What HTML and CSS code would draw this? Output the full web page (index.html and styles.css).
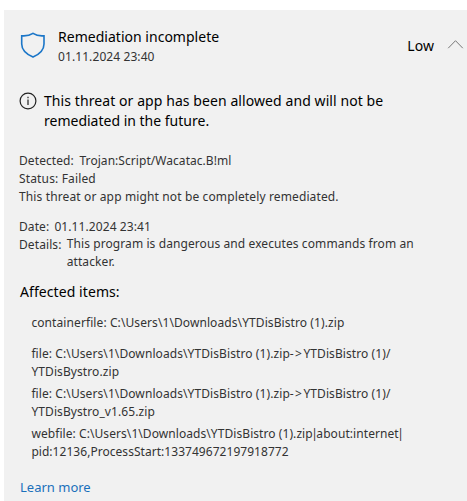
FILE: index.html
```
<!DOCTYPE html>
<html lang="en">
<head>
<meta charset="utf-8">
<title>Protection history</title>
<link rel="stylesheet" href="styles.css">
</head>
<body>
<main class="card">
  <header class="head">
    <svg class="shield" width="26" height="28" viewBox="0 0 26 28" fill="none" stroke="#1b76c8" stroke-width="1.600"><path d="M13 2.300C9.800 4.400 6 5.200 1.700 4.800V13C1.700 18.500 6.500 23.200 13 26.100C19.500 23.200 24 18.500 24 13V4.800C20 5.200 16.200 4.400 13 2.300Z"/></svg>
    <div class="heading">
      <h1 class="title">Remediation incomplete</h1>
      <p class="time">01.11.2024 23:40</p>
    </div>
    <span class="level">Low</span>
    <svg class="chevron" width="17" height="11" viewBox="0 0 17 11" fill="none" stroke="#777" stroke-width="1"><path d="M1.200 9.200L8.500 1.700L15.800 9.200"/></svg>
  </header>
  <section class="notice">
    <svg class="info" width="18" height="18" viewBox="0 0 18 18"><circle cx="9" cy="9" r="7.900" fill="none" stroke="#222" stroke-width="1.200"/><path d="M9 7.500V13M9 4.800V6.200" stroke="#222" stroke-width="1.200"/></svg>
    <p>This threat or app has been allowed and will not be<br><span class="plain">remediated in the future.</span></p>
  </section>
  <section class="status">
    <p><span class="label">Detected:</span><span class="threat">Trojan:Script/Wacatac.B!ml</span></p>
    <p class="state">Status: Failed</p>
    <p class="remark">This threat or app might not be completely remediated.</p>
  </section>
  <section class="details">
    <p><span class="label date">Date:</span>01.11.2024 23:41</p>
    <div class="description"><span class="name">Details:</span><p>This program is dangerous and executes commands from an<br>attacker.</p></div>
  </section>
  <h2 class="affected">Affected items:</h2>
  <ul class="items">
    <li class="container">containerfile: C:\Users\1\Downloads\YTDisBistro (1).zip</li>
    <li>file: C:\Users\1\Downloads\YTDisBistro (1).zip<span class="arrow">-&gt;</span>YTDisBistro (1)/<br>YTDisBystro.zip</li>
    <li>file: C:\Users\1\Downloads\YTDisBistro (1).zip<span class="arrow">-&gt;</span>YTDisBistro (1)/<br>YTDisBystro_v1.65.zip</li>
    <li class="web">webfile: C:\Users\1\Downloads\YTDisBistro (1).zip<span class="bar">|</span>about:internet<span class="bar">|</span><br><span class="process">pid:12136,ProcessStart:133749672197918772</span></li>
  </ul>
  <a class="link">Learn more</a>
</main>
</body>
</html>
```
FILE: styles.css
```
* { box-sizing: border-box; margin: 0; padding: 0; }
body {
  background: #fff;
  color: #333;
  font: 12px/18px "Noto Sans", sans-serif;
  letter-spacing: 0.09px;
  white-space: nowrap;
  overflow: hidden;
}
.card {
  margin: 10px 0 0 4px;
  height: 491px;
  padding: 17px 3px 0 15px;
  background: #f1f1f1;
}
.head { display: flex; height: 39px; }
.shield { flex: none; margin: 4px 12px 0 1px; }
.heading { flex: 1; }
.title, .affected, .notice, .level {
  color: #000;
  font-size: 14px;
  font-weight: 400;
  line-height: 20px;
  letter-spacing: 0.08px;
}
.title { letter-spacing: 0.02px; }
.time { margin-top: 1px; }
.level { margin: 9px 13px 0 0; }
.chevron { margin-top: 12px; }
.notice { display: flex; gap: 7px; margin-top: 25px; }
.info { flex: none; margin-top: 1px; }
.plain { letter-spacing: 0; }
.status { margin-top: 21px; }
.label { display: inline-block; width: 60.5px; }
.threat { letter-spacing: 0.05px; }
.state { letter-spacing: 0.15px; }
.remark { letter-spacing: 0.13px; }
.date { width: 35.4px; }
.details { margin-top: 12px; }
.description { display: flex; margin-top: -1px; }
.name { width: 47.7px; padding-top: 1px; }
.affected { margin: 11px 0 0 1px; }
.items { list-style: none; margin: 12px 0 0 12.4px; }
.items li { margin-bottom: 4px; }
.items .container { margin-bottom: 13px; }
.arrow { letter-spacing: 1.4px; }
.web { letter-spacing: 0.07px; }
.bar { letter-spacing: -1.5px; margin-left: -1.5px; }
.process { letter-spacing: 0.04px; }
.link {
  display: block;
  margin: 16px 0 0 1px;
  color: #1a70bb;
  font-size: 13px;
  line-height: 20px;
  letter-spacing: 0;
}
```
